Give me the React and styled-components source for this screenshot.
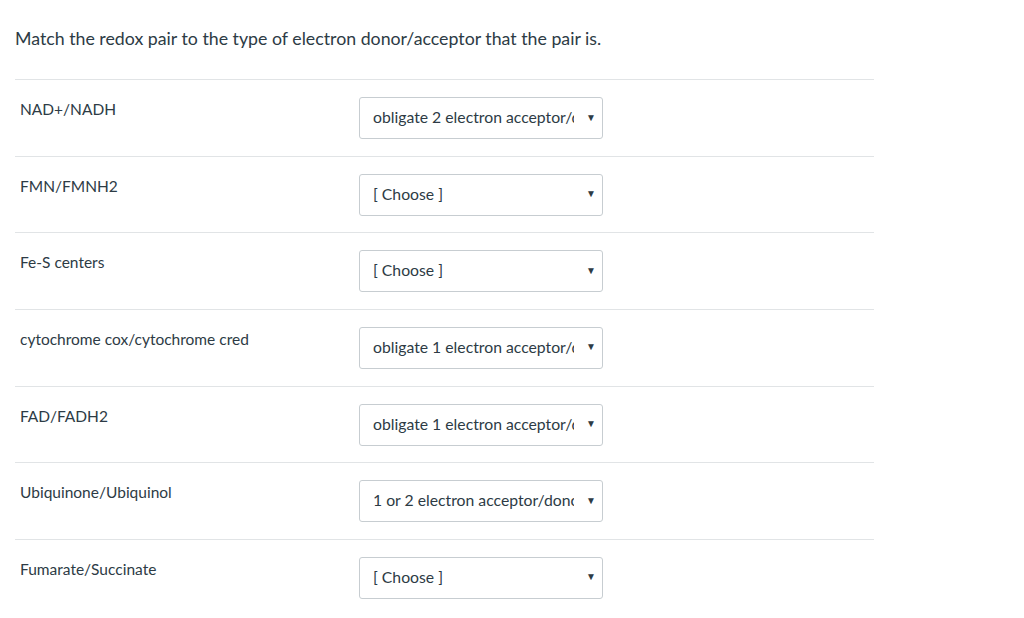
import React from "react";
import styled, { createGlobalStyle } from "styled-components";

const Global = createGlobalStyle`
  html, body { margin: 0; padding: 0; background: #fff; }
  body { font-family: Lato, "Open Sans", sans-serif; color: #2d3b45; }
  *, *::before, *::after { box-sizing: border-box; }
`;

const Page = styled.div`
  padding: 26px 0 0 15px;
  width: 874px;
`;

const Prompt = styled.p`
  margin: 0 0 29px;
  font-size: 17.75px;
  line-height: 24px;
  color: #2d3b45;
`;

const Row = styled.div`
  display: flex;
  align-items: flex-start;
  border-top: 1px solid #e1e4e6;
  padding: 17px 0 16.67px;
`;

const Label = styled.div`
  width: 344px;
  padding: 1px 0 0 5px;
  font-size: 15.5px;
  line-height: 22px;
  color: #2d3b45;
`;

const Select = styled.div`
  width: 244px;
  height: 42px;
  border: 1px solid #c7cdd1;
  border-radius: 3px;
  background: #fff;
  padding: 0 6px 3px 13px;
  display: flex;
  align-items: center;
  font-size: 15.75px;
  color: #2d3b45;
`;

const Value = styled.span`
  flex: 1;
  min-width: 0;
  white-space: nowrap;
  overflow: hidden;
  text-overflow: clip;
`;

const Arrow = styled.span`
  flex: none;
  margin-left: 12px;
  font-size: 10px;
  line-height: 1;
  color: #2d3b45;
`;

const rows = [
  ["NAD+/NADH", "obligate 2 electron acceptor/donor"],
  ["FMN/FMNH2", "[ Choose ]"],
  ["Fe-S centers", "[ Choose ]"],
  ["cytochrome cox/cytochrome cred", "obligate 1 electron acceptor/donor"],
  ["FAD/FADH2", "obligate 1 electron acceptor/donor"],
  ["Ubiquinone/Ubiquinol", "1 or 2 electron acceptor/donor"],
  ["Fumarate/Succinate", "[ Choose ]"],
];

export default function App() {
  return (
    <>
      <Global />
      <Page>
        <Prompt>
          Match the redox pair to the type of electron donor/acceptor that the pair is.
        </Prompt>
        {rows.map(([label, value]) => (
          <Row key={label}>
            <Label>{label}</Label>
            <Select>
              <Value>{value}</Value>
              <Arrow>▼</Arrow>
            </Select>
          </Row>
        ))}
      </Page>
    </>
  );
}
